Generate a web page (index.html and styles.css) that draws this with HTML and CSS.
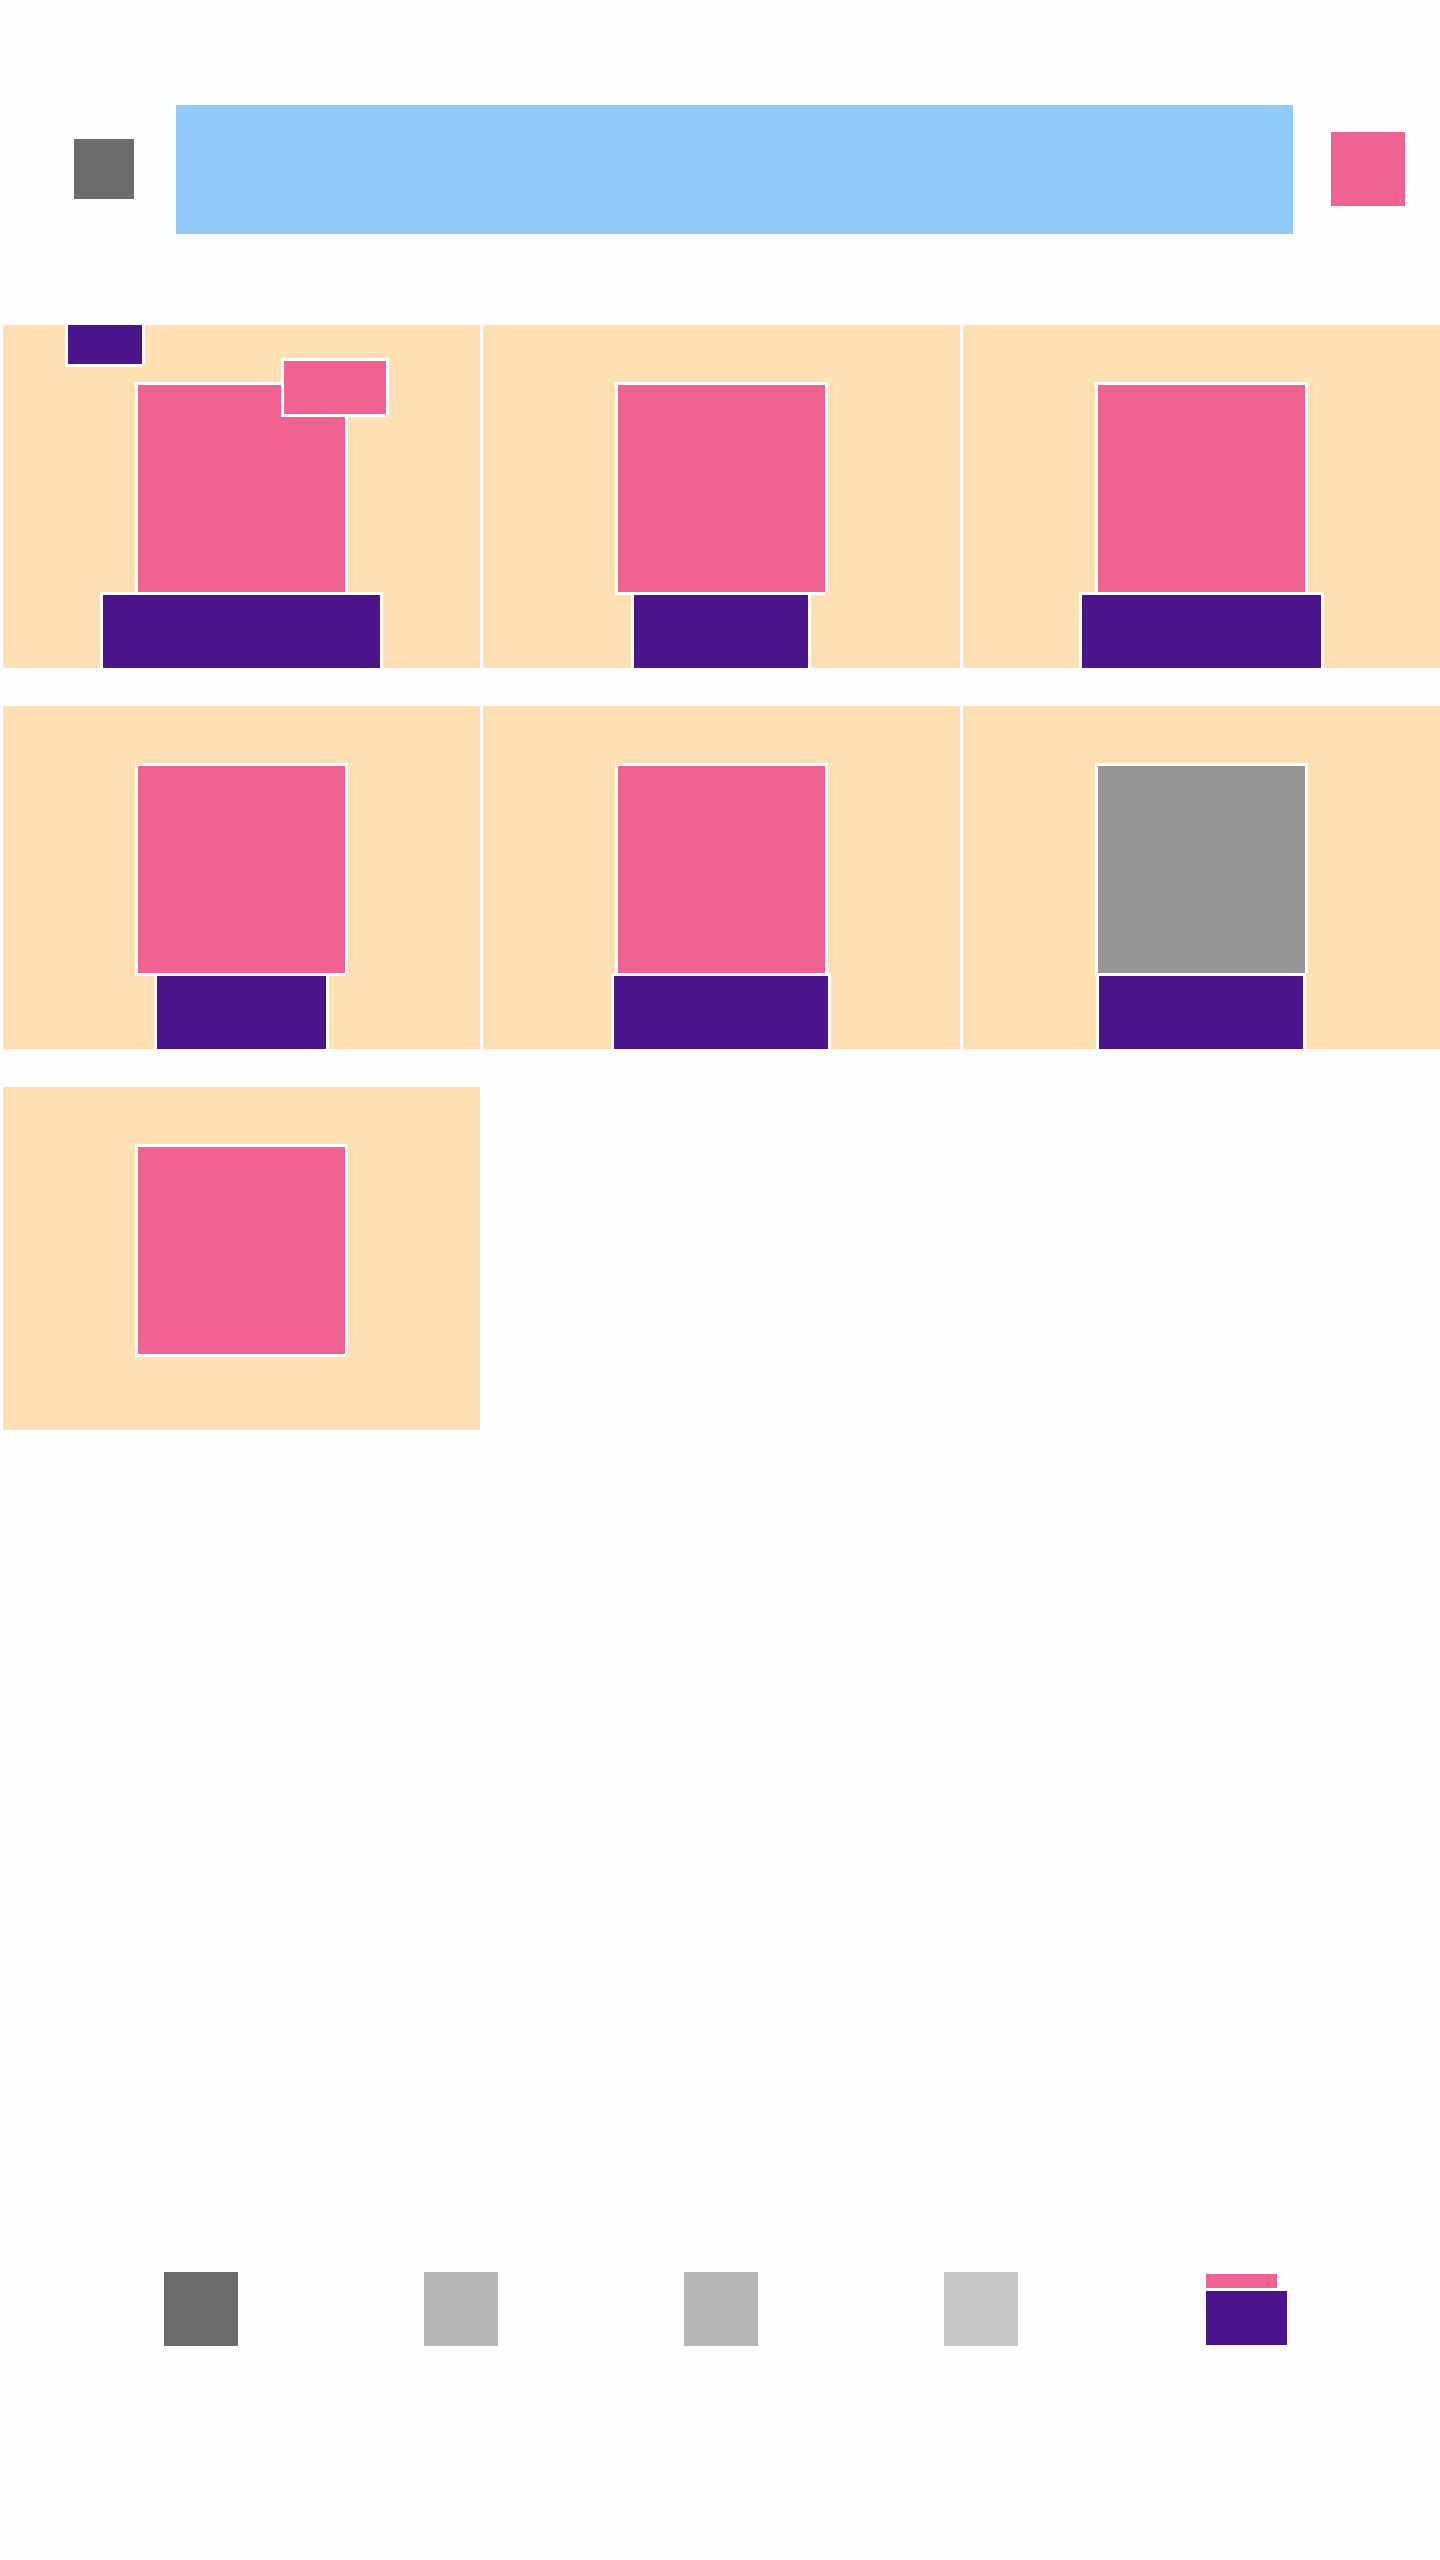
FILE: index.html
```html
<!DOCTYPE html>
<html lang="en">
<head>
<meta charset="UTF-8">
<meta name="viewport" content="width=device-width, initial-scale=1.0">
<title>Document</title>
<link rel="stylesheet" href="styles.css">
</head>
<body>
<div class="header">
    <div class="menu-btn"></div>
    <div class="search-box"></div>
    <div class="cart-btn"></div>
</div>

<div class="product-grid">
    <div class="card">
        <div class="badge-top"></div>
        <div class="badge-sale"></div>
        <div class="thumb"></div>
        <div class="name" style="width: 277px"></div>
    </div>
    <div class="card">
        <div class="thumb"></div>
        <div class="name nudge" style="width: 174px"></div>
    </div>
    <div class="card">
        <div class="thumb"></div>
        <div class="name" style="width: 239px"></div>
    </div>
    <div class="card">
        <div class="thumb"></div>
        <div class="name" style="width: 169px"></div>
    </div>
    <div class="card">
        <div class="thumb"></div>
        <div class="name nudge" style="width: 214px"></div>
    </div>
    <div class="card">
        <div class="thumb soldout"></div>
        <div class="name nudge" style="width: 204px"></div>
    </div>
    <div class="card">
        <div class="thumb"></div>
    </div>
</div>

<div class="bottom-nav">
    <div class="nav-item dark"></div>
    <div class="nav-item mid"></div>
    <div class="nav-item mid"></div>
    <div class="nav-item light"></div>
    <div class="nav-profile">
        <div class="nav-profile-top"></div>
        <div class="nav-profile-main"></div>
    </div>
</div>
</body>
</html>
```

FILE: styles.css
```css
html, body {
    margin: 0;
    height: 2560px;
    background-color: #fefefe;
    overflow: hidden;
}

/* header */
.header {
    display: flex;
    align-items: center;
    padding: 105px 0 0 74px;
}
.menu-btn {
    width: 60px;
    height: 60px;
    margin-bottom: 1px; /* keeps it on the whole pixel */
    background-color: #6c6c6c;
}
.search-box {
    width: 1117px;
    height: 129px;
    margin-left: 42px;
    background-color: #90caf9;
}
.cart-btn {
    width: 74px;
    height: 74px;
    margin-left: 38px;
    margin-bottom: 1px;
    background-color: #f06292;
}

/* products */
.product-grid {
    display: grid;
    grid-template-columns: repeat(3, 477px);
    column-gap: 3px;
    row-gap: 38px;
    margin-top: 91px;
    padding-left: 3px;
}
.card {
    position: relative;
    display: flex;
    flex-direction: column;
    align-items: center;
    height: 283px;
    padding-top: 60px;
    background-color: #ffe0b2;
    overflow: hidden;
}

/* white outline, the bottom right corner stays open */
.thumb, .name, .badge-top, .badge-sale {
    box-shadow: -3px -3px 0 #fff, 3px -3px 0 #fff, -3px 3px 0 #fff, 3px 0 0 #fff, 0 3px 0 #fff;
}
.thumb {
    flex: none;
    width: 207px;
    height: 207px;
    background-color: #f06292;
}
.thumb.soldout {
    background-color: #959595;
}
.name {
    flex: none;
    height: 73px;
    margin-top: 3px;
    background-color: #4a148c;
}
.name.nudge {
    margin-right: 1px;
}
.badge-top {
    position: absolute;
    top: 0;
    left: 65px;
    width: 74px;
    height: 39px;
    background-color: #4a148c;
}
.badge-sale {
    position: absolute;
    top: 36px;
    left: 281px;
    width: 102px;
    height: 53px;
    background-color: #f06292;
    z-index: 1;
}

/* bottom navigation */
.bottom-nav {
    display: flex;
    align-items: flex-start;
    gap: 186px;
    margin-top: 842px;
    padding-left: 164px;
}
.nav-item {
    width: 74px;
    height: 74px;
}
.nav-item.dark {
    background-color: #6c6c6c;
}
.nav-item.mid {
    background-color: #b6b6b6;
}
.nav-item.light {
    background-color: #c7c7c7;
}
.nav-profile {
    display: flex;
    flex-direction: column;
    gap: 3px;
    margin: 2px 0 0 2px;
}
.nav-profile-top {
    width: 71px;
    height: 14px;
    background-color: #f06292;
}
.nav-profile-main {
    width: 81px;
    height: 54px;
    background-color: #4a148c;
}
```
